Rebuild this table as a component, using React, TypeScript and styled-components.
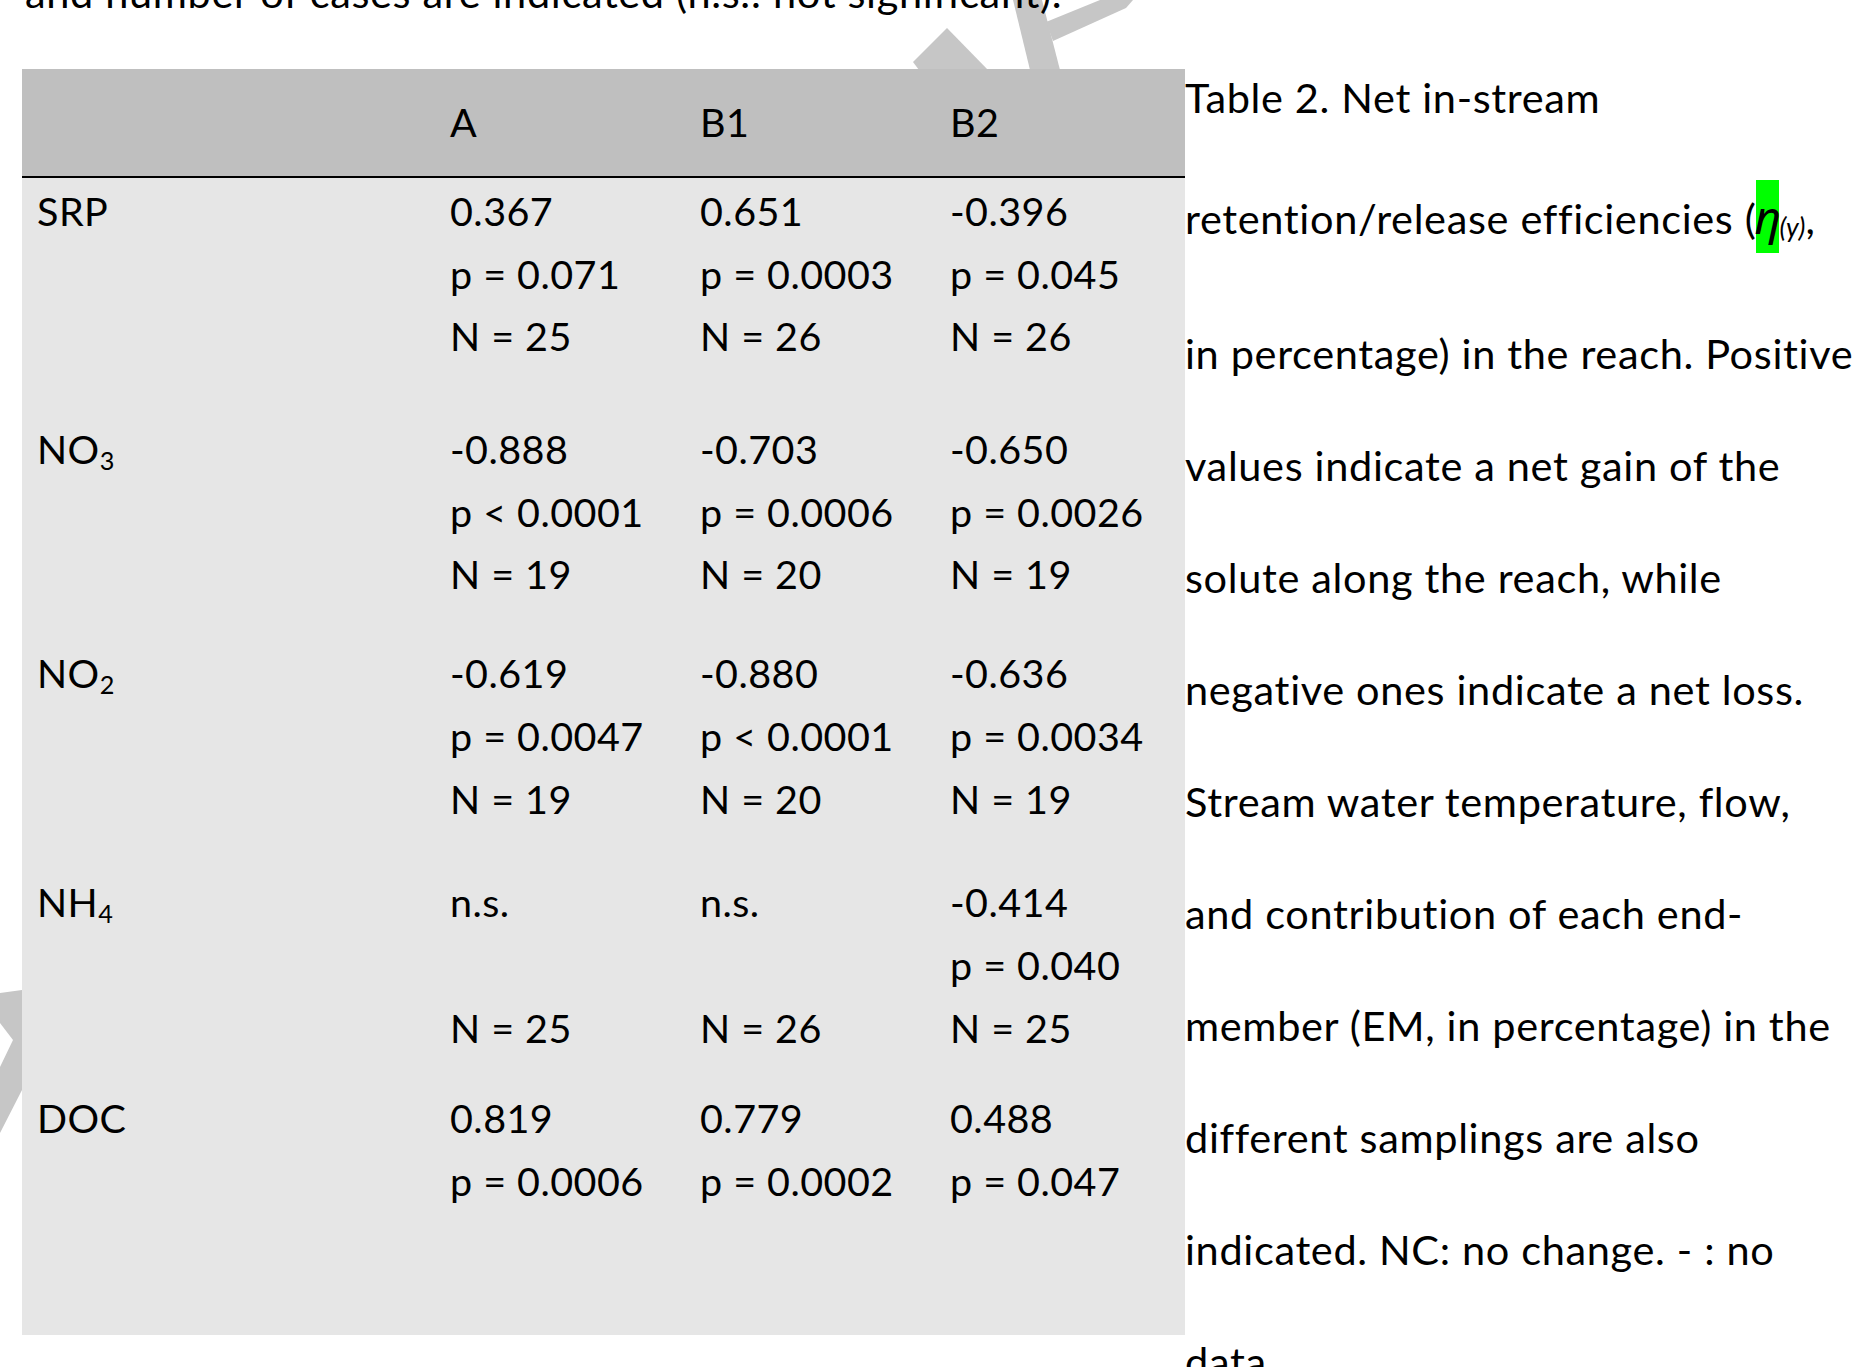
import React from "react";
import styled, { createGlobalStyle } from "styled-components";

const GlobalStyle = createGlobalStyle`
  html, body {
    margin: 0;
    padding: 0;
    background: #ffffff;
  }
`;

// Styled Components
const Page = styled.div`
  position: relative;
  width: 1861px;
  height: 1367px;
  overflow: hidden;
  background: #ffffff;
  color: #000000;
  font-family: Lato, "Liberation Sans", sans-serif;
`;

const Watermark = styled.svg`
  position: absolute;
  top: 0;
  left: 0;
  width: 1861px;
  height: 1367px;
  fill: #c6c6c6;
  pointer-events: none;
`;

const Intro = styled.p`
  position: relative;
  margin: -33px 0 0 25px;
  font-size: 41.5px;
  letter-spacing: 0.65px;
  line-height: 50px;
  height: 50px;
  white-space: nowrap;
`;

const Body = styled.div`
  display: flex;
  align-items: flex-start;
  margin-top: 52px;
`;

const Table = styled.div`
  position: relative;
  flex-shrink: 0;
  width: 1163px;
  height: 1266px;
  margin-left: 22px;
  background: #e6e6e6;
  font-size: 39.5px;
  letter-spacing: 0.45px;
`;

const columns = "413px 250px 250px 250px";

const HeadRow = styled.div`
  display: grid;
  grid-template-columns: ${columns};
  height: 109px;
  padding-top: 22px;
  box-sizing: border-box;
  background: #bfbfbf;
  border-bottom: 2px solid #000000;
  line-height: 62.7px;
`;

const HeadCell = styled.div`
  padding-left: 15px;
`;

const TableBody = styled.div`
  padding-top: 2px;
`;

const Row = styled.div<{ $after: number }>`
  display: grid;
  grid-template-columns: ${columns};
  padding-bottom: ${(p) => p.$after}px;
`;

const Cell = styled.div`
  padding-left: 15px;
`;

const Line = styled.div`
  height: 62.7px;
  line-height: 62.7px;
  white-space: nowrap;
`;

const Sub = styled.sub`
  font-size: 0.64em;
  vertical-align: -0.22em;
  line-height: 0;
`;

const Caption = styled.div`
  margin-top: -28.4px;
  font-size: 41.5px;
  letter-spacing: 0.65px;
  white-space: nowrap;
`;

const CaptionLine = styled.div<{ $gap: number }>`
  height: 112px;
  line-height: 112px;
  margin-top: ${(p) => p.$gap}px;
`;

const Eta = styled.span`
  display: inline-block;
  height: 73px;
  line-height: 73px;
  width: 23px;
  background: #00ff00;
  font-family: "Noto Sans", "DejaVu Sans", sans-serif;
  font-style: italic;
  font-size: 46px;
  letter-spacing: 0;
  text-indent: -2px;
`;

const EtaSub = styled.span`
  font-style: italic;
  font-size: 0.64em;
  letter-spacing: 0;
  vertical-align: -0.12em;
  line-height: 0;
`;

type RowData = { label: React.ReactNode; cells: string[][]; after: number };

const rows: RowData[] = [
  {
    label: "SRP",
    cells: [
      ["0.367", "p = 0.071", "N = 25"],
      ["0.651", "p = 0.0003", "N = 26"],
      ["-0.396", "p = 0.045", "N = 26"],
    ],
    after: 50,
  },
  {
    label: (
      <>
        NO<Sub>3</Sub>
      </>
    ),
    cells: [
      ["-0.888", "p < 0.0001", "N = 19"],
      ["-0.703", "p = 0.0006", "N = 20"],
      ["-0.650", "p = 0.0026", "N = 19"],
    ],
    after: 36,
  },
  {
    label: (
      <>
        NO<Sub>2</Sub>
      </>
    ),
    cells: [
      ["-0.619", "p = 0.0047", "N = 19"],
      ["-0.880", "p < 0.0001", "N = 20"],
      ["-0.636", "p = 0.0034", "N = 19"],
    ],
    after: 41,
  },
  {
    label: (
      <>
        NH<Sub>4</Sub>
      </>
    ),
    cells: [
      ["n.s.", "\u00a0", "N = 25"],
      ["n.s.", "\u00a0", "N = 26"],
      ["-0.414", "p = 0.040", "N = 25"],
    ],
    after: 28,
  },
  {
    label: "DOC",
    cells: [
      ["0.819", "p = 0.0006"],
      ["0.779", "p = 0.0002"],
      ["0.488", "p = 0.047"],
    ],
    after: 0,
  },
];

const captionLines: { text: React.ReactNode; gap: number }[] = [
  { text: "Table 2. Net in-stream", gap: 0 },
  {
    text: (
      <>
        retention/release efficiencies (<Eta>η</Eta>
        <EtaSub>(y)</EtaSub>,
      </>
    ),
    gap: 9,
  },
  { text: "in percentage) in the reach. Positive", gap: 23 },
  { text: "values indicate a net gain of the", gap: 0 },
  { text: "solute along the reach, while", gap: 0 },
  { text: "negative ones indicate a net loss.", gap: 0 },
  { text: "Stream water temperature, flow,", gap: 0 },
  { text: "and contribution of each end-", gap: 0 },
  { text: "member (EM, in percentage) in the", gap: 0 },
  { text: "different samplings are also", gap: 0 },
  { text: "indicated. NC: no change. - : no", gap: 0 },
  { text: "data", gap: 0 },
];

function App() {
  return (
    <>
      <GlobalStyle />
      <Page>
        <Watermark viewBox="0 0 1861 1367" aria-hidden="true">
          <polygon points="1013,0 1042,0 1060,70 1030,70" />
          <polygon points="1046,22 1100,0 1133,0 1126,8 1053,41" />
          <polygon points="913,62 947,28 988,70 919,70" />
          <polygon points="0,993 22,990 22,1090 0,1133 0,1067 13,1040 0,1023" />
        </Watermark>
        <Intro>and number of cases are indicated (n.s.: not significant).</Intro>
        <Body>
          <Table>
            <HeadRow>
              <HeadCell />
              <HeadCell>A</HeadCell>
              <HeadCell>B1</HeadCell>
              <HeadCell>B2</HeadCell>
            </HeadRow>
            <TableBody>
              {rows.map((row, i) => (
                <Row key={i} $after={row.after}>
                  <Cell>
                    <Line>{row.label}</Line>
                  </Cell>
                  {row.cells.map((cell, j) => (
                    <Cell key={j}>
                      {cell.map((v, k) => (
                        <Line key={k}>{v}</Line>
                      ))}
                    </Cell>
                  ))}
                </Row>
              ))}
            </TableBody>
          </Table>
          <Caption>
            {captionLines.map((l, i) => (
              <CaptionLine key={i} $gap={l.gap}>
                {l.text}
              </CaptionLine>
            ))}
          </Caption>
        </Body>
      </Page>
    </>
  );
}

export default App;
